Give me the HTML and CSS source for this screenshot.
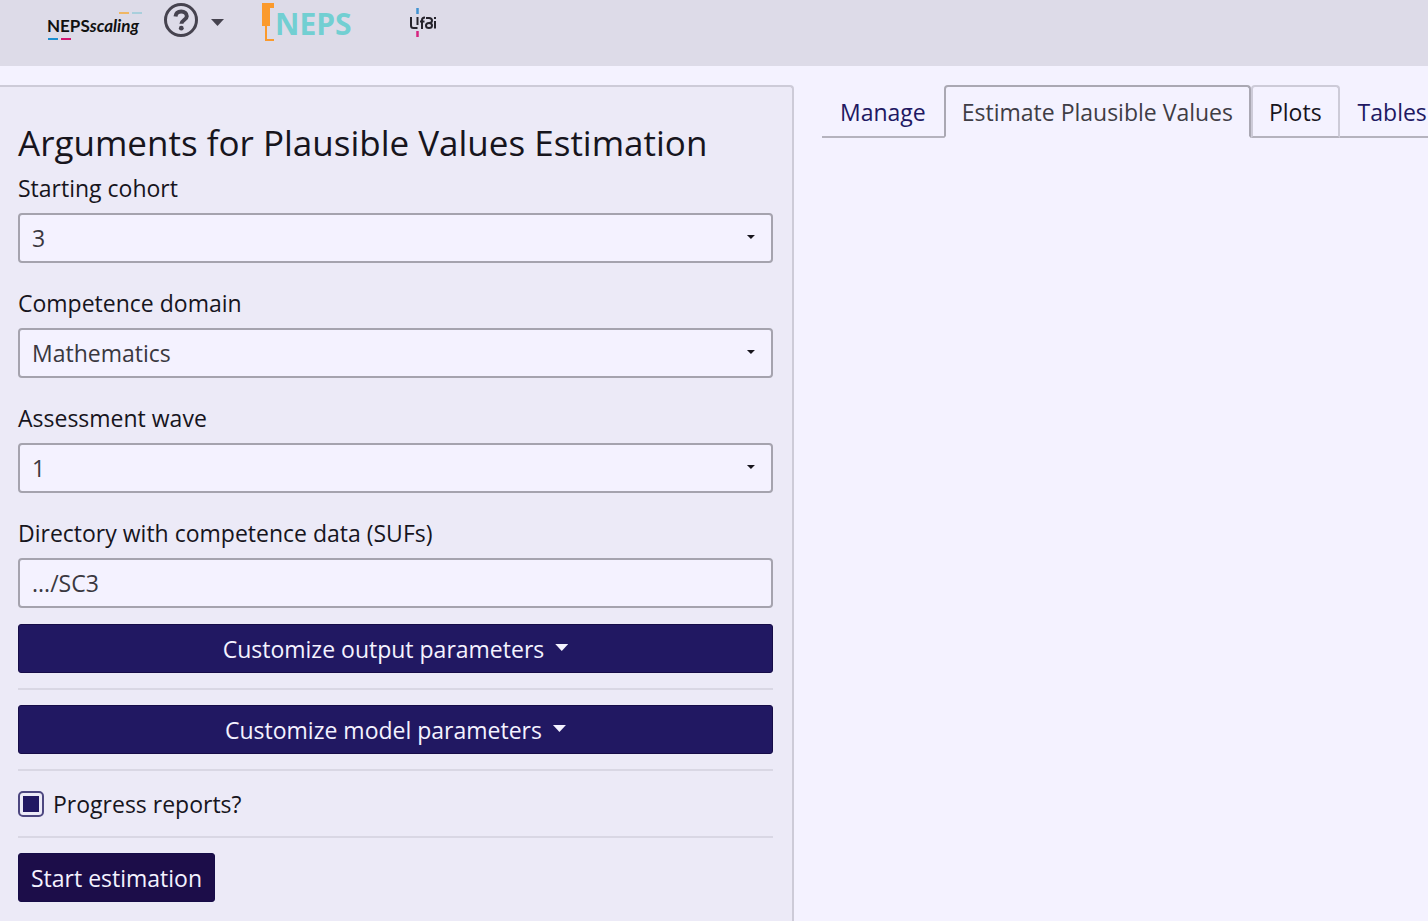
FILE: index.html
```html
<!DOCTYPE html>
<html lang="en">
<head>
<meta charset="utf-8">
<title>NEPSscaling</title>
<link rel="stylesheet" href="styles.css">
</head>
<body>
<header class="navbar">
  <a class="brand" href="#" aria-label="NEPSscaling">
    <span class="brand-bars brand-bars-top"><i class="bar bar-orange"></i><i class="bar bar-teal"></i></span>
    <span class="brand-name">NEPS<em>scaling</em></span>
    <span class="brand-bars"><i class="bar bar-blue"></i><i class="bar bar-pink"></i></span>
  </a>
  <button class="help" type="button" aria-label="Help">
    <svg class="help-icon" viewBox="0 0 36 36" aria-hidden="true">
      <circle cx="18" cy="18" r="15.5" fill="none" stroke="currentColor" stroke-width="3"/>
      <path d="M12.500 14.500c.4-3.400 2.700-5 5.700-5 3.200 0 5.600 1.900 5.600 4.700 0 3.700-5.400 3.900-5.400 7.600" fill="none" stroke="currentColor" stroke-width="4"/>
      <circle cx="18.300" cy="26.200" r="2.400" fill="currentColor"/>
    </svg>
    <span class="caret"></span>
  </button>
  <a class="neps" href="#" aria-label="NEPS">
    <svg class="neps-mark" viewBox="0 0 13 40" aria-hidden="true">
      <path d="M0 0h12v5H8v18H5v13h7v2H3V23H0z" fill="#fb9a2c"/>
    </svg>
    <span class="neps-name">NEPS</span>
  </a>
  <a class="lifbi" href="#" aria-label="LIfBi">
    <svg class="lifbi-mark" viewBox="0 0 28 32" aria-hidden="true">
      <path d="M8.500 1v6" stroke="#3f92d2" stroke-width="2.500"/>
      <path d="M8.500 24v6" stroke="#d6247f" stroke-width="2.500"/>
      <g fill="none" stroke="#25232b" stroke-width="2">
        <path d="M2 10v8.500q0 2.500 2.500 2.500h4"/>
        <path d="M8.500 10v8"/>
        <path d="M13 22v-9q0-2.500 3-2.500M11 14.500h4.500"/>
        <path d="M17 11h3q3 0 3 2.500t-3 2.500q-3 0-3 2.500t3 2.500q3 0 3-2.500T20 16"/>
        <path d="M26 14v7.500M26 10v2"/>
      </g>
    </svg>
  </a>
</header>

<div class="layout">
  <form class="sidebar">
    <h1 class="title">Arguments for Plausible Values Estimation</h1>
    <div class="field">
      <label for="cohort">Starting cohort</label>
      <div class="select"><select id="cohort"><option>3</option></select></div>
    </div>
    <div class="field">
      <label for="domain">Competence domain</label>
      <div class="select"><select id="domain"><option>Mathematics</option></select></div>
    </div>
    <div class="field">
      <label for="wave">Assessment wave</label>
      <div class="select"><select id="wave"><option>1</option></select></div>
    </div>
    <div class="field">
      <label for="directory">Directory with competence data (SUFs)</label>
      <input id="directory" type="text" value=".../SC3">
    </div>
    <button class="btn btn-block" type="button">Customize output parameters<span class="caret"></span></button>
    <hr>
    <button class="btn btn-block" type="button">Customize model parameters<span class="caret"></span></button>
    <hr>
    <label class="check"><input type="checkbox" checked>Progress reports?</label>
    <hr>
    <button class="btn btn-start" type="button">Start estimation</button>
  </form>
  <main class="content">
    <nav class="tabs">
      <a class="tab" href="#">Manage</a>
      <a class="tab tab-active" href="#">Estimate Plausible Values</a>
      <a class="tab tab-hover" href="#">Plots</a>
      <a class="tab" href="#">Tables</a>
    </nav>
  </main>
</div>
</body>
</html>
```
FILE: styles.css
```css
* { box-sizing: border-box; }

body {
  margin: 0;
  min-height: 100vh;
  display: flex;
  flex-direction: column;
  overflow: hidden;
  background: #f4f2ff;
  color: #17151d;
  font: 23px/32px "Open Sans", "Noto Sans", sans-serif;
}

a { color: inherit; text-decoration: none; }

button, input, select { font: inherit; color: inherit; }

.navbar {
  display: flex;
  align-items: flex-start;
  height: 66px;
  padding: 0 47px;
  background: #dddbe8;
}

.brand {
  display: flex;
  flex-direction: column;
  width: 95px;
  padding-top: 12px;
}

.brand-name {
  font: bold 17px/24px Lato, sans-serif;
  color: #111;
}

.brand-bars { display: flex; gap: 3px; padding-left: 1px; }
.brand-bars-top { justify-content: flex-end; }
.bar { width: 10px; height: 2px; }
.bar-orange { background: #efb765; }
.bar-teal { background: #a9cfdc; }
.bar-blue { background: #1c8fd0; }
.bar-pink { background: #d3156f; }

.help {
  display: flex;
  align-items: center;
  gap: 12px;
  margin: 2px 0 0 21px;
  padding: 0;
  border: 0;
  background: none;
  color: #46434f;
}

.help-icon { width: 36px; height: 36px; }

.caret {
  width: 13px;
  height: 7px;
  background: currentColor;
  clip-path: polygon(0 0, 100% 0, 50% 100%);
}

.help .caret { margin-top: 5px; }
.btn .caret { margin-bottom: 2px; }

.neps { display: flex; margin: 3px 0 0 38px; }
.neps-mark { width: 13px; height: 40px; }
.neps-name {
  font: bold 30px/42px "Open Sans", sans-serif;
  color: #72cfd2;
}

.lifbi { margin: 7px 0 0 57px; }
.lifbi-mark { display: block; width: 28px; height: 32px; }

.layout {
  display: flex;
  flex: 1;
  gap: 28px;
  padding-top: 19px;
}

.sidebar {
  flex: 0 0 55.6%;
  padding: 35px 19px 19px 18px;
  border: solid #cdcbd8;
  border-width: 2px 2px 0 0;
  border-top-right-radius: 4px;
  background: #eceaf7;
}

.title {
  margin: 0 0 8px;
  font-size: 35px;
  font-weight: 400;
  line-height: 42px;
}

.field { margin-bottom: 24px; }
.field label { display: block; margin-bottom: 9px; }

.select { position: relative; }
.select::after {
  content: "";
  position: absolute;
  top: 22px;
  right: 18px;
  width: 8px;
  height: 4px;
  background: #17151d;
  clip-path: polygon(0 0, 100% 0, 50% 100%);
}

.field select,
.field input {
  display: block;
  appearance: none;
  width: 100%;
  height: 50px;
  padding: 0 12px;
  border: 2px solid #a5a3ae;
  border-radius: 4px;
  background: #f4f2ff;
  color: #3a3840;
}

.field:nth-of-type(4) { margin-bottom: 16px; }

.btn {
  display: flex;
  align-items: center;
  justify-content: center;
  gap: 11px;
  height: 49px;
  padding: 0 12px;
  border: 1px solid #160c48;
  border-radius: 3px;
  background: #211862;
  color: #f4f2ff;
}

.btn-block { width: 100%; }
.btn-start { background: #1c0d49; }

hr {
  height: 2px;
  margin: 15px 0;
  border: 0;
  background: #d9d7e4;
}

.check { display: flex; align-items: center; gap: 9px; height: 35px; }
.check input {
  appearance: none;
  width: 26px;
  height: 26px;
  margin: 0;
  padding: 3px;
  border: 2px solid #4d4780;
  border-radius: 5px;
  background: #211862 content-box;
}

.content { flex: 1; min-width: 0; }

.tabs {
  display: flex;
  box-shadow: inset 0 -2px #b5b3be;
}

.tab {
  flex: none;
  height: 53px;
  padding: 9px 16px;
  border: 2px solid transparent;
  border-radius: 4px 4px 0 0;
  color: #211862;
}

.tab-active {
  border-color: #aaa8b3;
  border-bottom-color: #f4f2ff;
  background: #f4f2ff;
  color: #3f3d45;
}

.tab-hover { border-color: #cdcbd8; border-bottom-color: #b5b3be; color: #17151d; }
```
